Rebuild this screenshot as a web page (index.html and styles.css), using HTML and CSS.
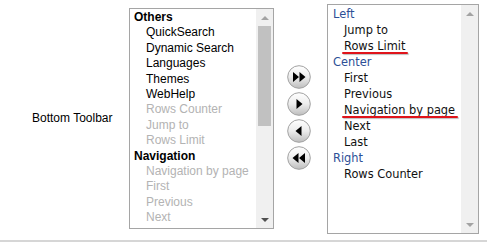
FILE: index.html
```html
<!DOCTYPE html>
<html lang="en">
<head>
    <meta charset="UTF-8">
    <title>Toolbar Layout</title>
    <link rel="stylesheet" href="styles.css">
</head>
<body>
    <div class="toolbar-row">
        <div class="row-label">Bottom Toolbar</div>

        <div class="listbox available">
            <div class="list-items">
                <div class="group">Others</div>
                <div class="item">QuickSearch</div>
                <div class="item">Dynamic Search</div>
                <div class="item">Languages</div>
                <div class="item">Themes</div>
                <div class="item">WebHelp</div>
                <div class="item disabled">Rows Counter</div>
                <div class="item disabled">Jump to</div>
                <div class="item disabled">Rows Limit</div>
                <div class="group">Navigation</div>
                <div class="item disabled">Navigation by page</div>
                <div class="item disabled">First</div>
                <div class="item disabled">Previous</div>
                <div class="item disabled">Next</div>
            </div>
            <div class="scrollbar">
                <div class="arrow up light"></div>
                <div class="track"><div class="thumb"></div></div>
                <div class="arrow down"></div>
            </div>
        </div>

        <div class="moves">
            <button class="move" title="Add all">
                <svg width="24" height="24" viewBox="0 0 24 24">
                    <defs>
                        <linearGradient id="btnGrad" x1="0" y1="0" x2="0" y2="1">
                            <stop offset="0" stop-color="#ffffff"/>
                            <stop offset="0.5" stop-color="#ececec"/>
                            <stop offset="1" stop-color="#bdbdbd"/>
                        </linearGradient>
                    </defs>
                    <circle cx="12" cy="12" r="11.3" fill="url(#btnGrad)" stroke="#a2a2a2"/>
                    <path d="M6 7 L12 12 L6 17 Z M12.5 7 L18.5 12 L12.5 17 Z" fill="#000"/>
                </svg>
            </button>
            <button class="move" title="Add">
                <svg width="24" height="24" viewBox="0 0 24 24">
                    <circle cx="12" cy="12" r="11.3" fill="url(#btnGrad)" stroke="#a2a2a2"/>
                    <path d="M9.5 7 L15.5 12 L9.5 17 Z" fill="#000"/>
                </svg>
            </button>
            <button class="move" title="Remove">
                <svg width="24" height="24" viewBox="0 0 24 24">
                    <circle cx="12" cy="12" r="11.3" fill="url(#btnGrad)" stroke="#a2a2a2"/>
                    <path d="M14.5 7 L8.5 12 L14.5 17 Z" fill="#000"/>
                </svg>
            </button>
            <button class="move" title="Remove all">
                <svg width="24" height="24" viewBox="0 0 24 24">
                    <circle cx="12" cy="12" r="11.3" fill="url(#btnGrad)" stroke="#a2a2a2"/>
                    <path d="M11.5 7 L5.5 12 L11.5 17 Z M18 7 L12 12 L18 17 Z" fill="#000"/>
                </svg>
            </button>
        </div>

        <div class="listbox selected">
            <div class="list-items">
                <div class="group">Left</div>
                <div class="item">Jump to</div>
                <div class="item"><span class="marked">Rows Limit</span></div>
                <div class="group">Center</div>
                <div class="item">First</div>
                <div class="item">Previous</div>
                <div class="item"><span class="marked">Navigation by page</span></div>
                <div class="item">Next</div>
                <div class="item">Last</div>
                <div class="group">Right</div>
                <div class="item">Rows Counter</div>
            </div>
            <div class="scrollbar">
                <div class="arrow up light"></div>
                <div class="track"></div>
                <div class="arrow down light"></div>
            </div>
        </div>
    </div>
    <div class="divider"></div>
</body>
</html>
```

FILE: styles.css
```css
body {
    margin: 0;
    background: #fff;
    font-family: "Liberation Sans", Arial, sans-serif;
    font-size: 12px;
    color: #000;
}
.toolbar-row {
    display: flex;
    align-items: center;
    height: 237px;
}
.row-label {
    width: 129px;
    box-sizing: border-box;
    padding-left: 32px;
    padding-bottom: 1px;
}
.listbox {
    display: flex;
    box-sizing: border-box;
    border: 1px solid #a5a5a5;
    background: #fff;
    overflow: hidden;
}
.list-items {
    flex: 1;
    overflow: hidden;
}
.available {
    width: 145px;
    height: 221px;
}
.available .list-items {
    padding: 1px 0 0 4px;
    line-height: 15.4px;
}
.available .group {
    font-weight: bold;
}
.available .item {
    padding-left: 12px;
    white-space: nowrap;
}
.available .disabled {
    color: #b3b3b3;
}
.selected {
    width: 152px;
    height: 230px;
}
.selected .list-items {
    padding: 1px 0 0 5px;
    font-family: "DejaVu Sans", Verdana, sans-serif;
    font-size: 11.4px;
    line-height: 16px;
    color: #111;
}
.selected .group {
    color: #2d4f96;
}
.selected .item {
    padding-left: 11px;
    white-space: nowrap;
}
.marked {
    position: relative;
}
.marked::after {
    content: "";
    position: absolute;
    left: -2px;
    right: -3px;
    bottom: -1px;
    height: 2px;
    border-radius: 1px;
    background: #e0141b;
    box-shadow: 1px 1px 1px rgba(0, 0, 0, 0.25);
}
.scrollbar {
    width: 17px;
    display: flex;
    flex-direction: column;
    background: #f0f0f0;
}
.track {
    flex: 1;
    padding: 0 2px;
}
.thumb {
    height: 100px;
    background: #c1c1c1;
}
.arrow {
    height: 17px;
    position: relative;
}
.arrow::before {
    content: "";
    position: absolute;
    left: 5px;
    border-left: 4px solid transparent;
    border-right: 4px solid transparent;
}
.arrow.up::before {
    top: 7px;
    border-bottom: 4px solid #505050;
}
.arrow.down::before {
    top: 7px;
    border-top: 4px solid #505050;
}
.arrow.up.light::before {
    border-bottom-color: #a3a3a3;
}
.arrow.down.light::before {
    border-top-color: #a3a3a3;
}
.moves {
    width: 53px;
    display: flex;
    flex-direction: column;
    align-items: center;
    gap: 3px;
    padding-right: 3px;
    box-sizing: border-box;
    margin-top: -2px;
}
.move {
    width: 24px;
    height: 24px;
    padding: 0;
    border: none;
    background: none;
    cursor: pointer;
}
.move svg {
    display: block;
}
.divider {
    margin-top: 3px;
    border-top: 2px solid #d6d6d6;
}
```
